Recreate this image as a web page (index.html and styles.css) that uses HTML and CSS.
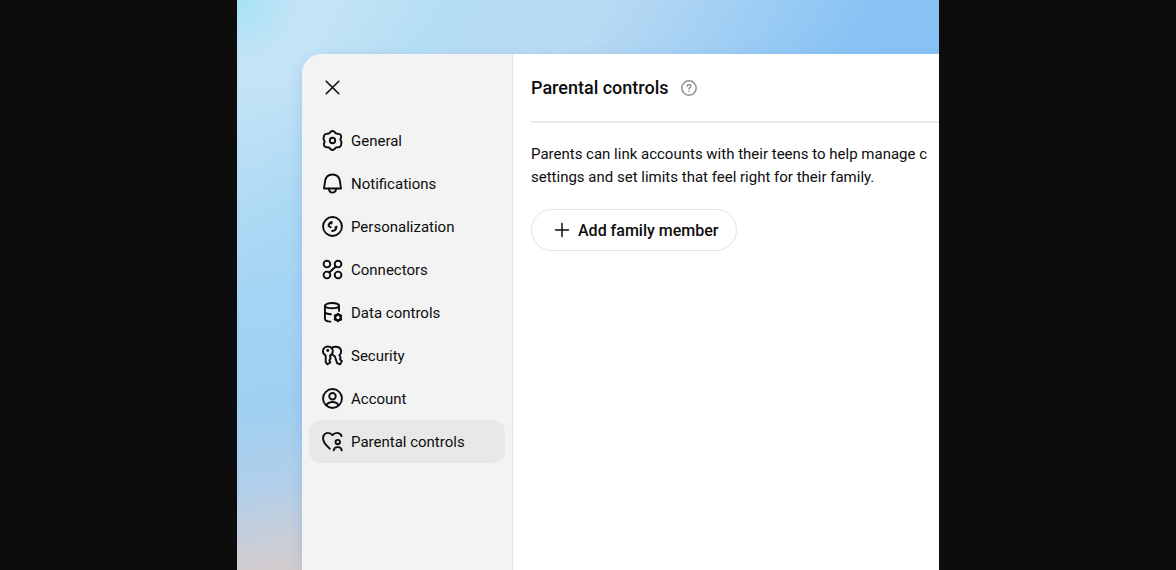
FILE: index.html
```html
<!DOCTYPE html>
<html lang="en">
<head>
<meta charset="utf-8">
<meta name="viewport" content="width=device-width, initial-scale=1">
<title>Parental controls</title>
<link rel="stylesheet" href="styles.css">
</head>
<body>
<main class="stage">
  <section class="dialog">
    <aside class="sidebar">
      <button class="close" type="button" aria-label="Close">
        <svg class="icon" viewBox="0 0 20 20"><path d="M4 4l12 12M16 4L4 16"/></svg>
      </button>
      <nav class="nav">
        <a class="nav-item" href="#general">
          <svg class="icon" viewBox="0 0 20 20"><path d="M8 1.900Q10 .1 12 1.900Q12.900 3.600 15 3.500Q18.300 3.700 18.300 7Q17 8.800 17.900 10Q18.900 11.300 18.300 13Q18.300 16.300 15 16.500Q12.900 16.400 12 18.100Q10 19.900 8 18.100Q7.100 16.400 5 16.500Q1.700 16.300 1.700 13Q3 11.200 2.100 10Q1.100 8.700 1.700 7Q1.700 3.700 5 3.500Q7.100 3.600 8 1.900Z"/><circle cx="10" cy="10" r="2.600"/></svg>
          <span>General</span>
        </a>
        <a class="nav-item" href="#notifications">
          <svg class="icon" viewBox="0 0 20 20"><path d="M1.900 14.800L2.900 8C3.400 4 6 1.400 10 1.400S16.600 4 17.100 8L18.100 14.800Z"/><path d="M6.400 15C6.900 17.500 8.200 18.700 10 18.700S13.100 17.500 13.600 15"/></svg>
          <span>Notifications</span>
        </a>
        <a class="nav-item" href="#personalization">
          <svg class="icon" viewBox="0 0 20 20"><circle cx="10" cy="10" r="9"/><path d="M9.300 5.600Q6 7 6.300 9.500L8.300 10.700M9.700 14.300Q13.500 13.900 13.900 10.300M9.300 5.600L9 7.200M13.900 10.300L12.700 10.900"/></svg>
          <span>Personalization</span>
        </a>
        <a class="nav-item" href="#connectors">
          <svg class="icon" viewBox="0 0 20 20"><circle cx="4.700" cy="4.800" r="3.200"/><circle cx="15.300" cy="4.800" r="3.200"/><circle cx="4.700" cy="15.200" r="3.200"/><circle cx="15.300" cy="15.200" r="3.200"/><path d="M13 7.100L7 12.900"/></svg>
          <span>Connectors</span>
        </a>
        <a class="nav-item" href="#data">
          <svg class="icon" viewBox="0 0 20 20"><ellipse cx="9.500" cy="3.500" rx="6.700" ry="2.500"/><path d="M2.800 3.500V16C2.800 17.600 5 18.600 8 18.700M16.200 3.500V8.500M2.800 9.800C3.500 11 5.500 11.600 8.500 11.600"/><circle class="heavy" cx="15.200" cy="14.800" r="2.700"/><path class="teeth" d="M15.200 11.200V12M15.200 17.600V18.400M12.100 13L12.800 13.400M17.600 16.200L18.300 16.600M12.100 16.600L12.800 16.200M17.600 13.400L18.300 13"/></svg>
          <span>Data controls</span>
        </a>
        <a class="nav-item" href="#security">
          <svg class="icon" viewBox="0 0 20 20"><path d="M5.500 1.400C2.800 1.400.9 3.300.9 5.900C.9 7.800 1.900 9 3.500 9.800V16.400L5.200 18.400L7.900 16.600L7 14.600L8.200 12.800L7.600 10.200C9.500 9.300 10.300 7.700 10.300 5.900C10.300 3.300 8.200 1.400 5.500 1.400Z"/><circle class="solid" cx="5.500" cy="5.300" r="1.400"/><path d="M9.100 2.800C10.300 1.900 12 1.500 13.700 1.700C16.500 2 18.300 4 18.200 6.500C18.200 8.200 17.500 9.200 16.500 9.800L17.700 12L17.100 13.700L18.900 15.200L17.300 18.400L14.300 17.200L12.300 10.900L10.500 9.500"/></svg>
          <span>Security</span>
        </a>
        <a class="nav-item" href="#account">
          <svg class="icon" viewBox="0 0 20 20"><circle cx="10" cy="10" r="9"/><circle cx="10" cy="7.900" r="3.100"/><path d="M4.200 16.400C5.400 14.200 7.400 13.300 10 13.300S14.600 14.200 15.800 16.400"/></svg>
          <span>Account</span>
        </a>
        <a class="nav-item nav-item-active" href="#parental" aria-current="page">
          <svg class="icon" viewBox="0 0 20 20"><path d="M7.500 16.800C3.500 13.600 1 10.800 1 7C1 4 3 1.800 5.600 1.800C7.600 1.800 9 2.600 10 3.900C11 2.600 12.500 1.800 14.300 1.800C16.300 1.800 17.900 2.900 18.700 4.800"/><circle cx="15" cy="10.500" r="2.100"/><path d="M11.200 18.500C11.500 16.300 12.900 15.400 15 15.400S18.500 16.300 18.800 18.500"/></svg>
          <span>Parental controls</span>
        </a>
      </nav>
    </aside>
    <div class="content">
      <header class="header">
        <h1 class="title">Parental controls</h1>
        <button class="help" type="button" aria-label="Help">
          <svg class="help-icon" viewBox="0 0 16 16"><circle cx="8" cy="8" r="7.200"/><path d="M6.200 6.300C6.300 5.100 7 4.600 8 4.600S9.800 5.200 9.800 6.200C9.800 7.500 8 7.500 8 9"/><path d="M8 11.300V11.400"/></svg>
        </button>
      </header>
      <p class="description">Parents can link accounts with their teens to help manage c<br>settings and set limits that feel right for their family.</p>
      <button class="add" type="button">
        <svg class="add-icon" viewBox="0 0 16 16"><path d="M8 1.500V14.500M1.500 8H14.500"/></svg>
        <span>Add family member</span>
      </button>
    </div>
  </section>
</main>
</body>
</html>
```
FILE: styles.css
```css
* {
  box-sizing: border-box;
}

body {
  margin: 0;
  background: #0d0d0d;
  color: #0d0d0d;
  font-family: Roboto, "Liberation Sans", sans-serif;
  font-size: 15px;
}

button {
  padding: 0;
  border: 0;
  background: none;
  color: inherit;
  font: inherit;
  cursor: pointer;
}

.stage {
  display: flex;
  max-width: 702px;
  min-height: 100vh;
  margin: 0 auto;
  padding: 54px 0 0 65px;
  overflow: hidden;
  background:
    radial-gradient(circle at 0 0, #a6e2f5 0, rgba(166, 226, 245, 0) 60px),
    linear-gradient(170deg, rgba(160, 210, 243, 0) 15%, #a5d5f4 50%, #9fd0f2 70%, #b1cfea 84%, #c7ced9 93%, #d5cccb 100%) 0 0 / 80px 100% no-repeat,
    linear-gradient(120deg, #c3e3f6 0, #c3e3f6 10%, #b5def3 20%, #b9daf3 36%, #88c3f4 62%, #84c0f3 100%);
}

.dialog {
  display: flex;
  flex: 1;
  min-width: 0;
  border-radius: 20px 0 0 0;
  background: #fff;
  box-shadow: 0 4px 14px rgba(80, 120, 200, 0.22);
}

.sidebar {
  display: flex;
  flex: 0 0 211px;
  flex-direction: column;
  align-items: flex-start;
  padding: 20px 7px;
  border-right: 1px solid #e6e6e6;
  border-radius: 20px 0 0 0;
  background: #f3f3f3;
}

.close {
  display: flex;
  margin-left: 13px;
  padding: 3px 0;
}

.icon {
  flex: none;
  width: 21px;
  height: 21px;
  fill: none;
  stroke: currentColor;
  stroke-width: 1.8;
  stroke-linecap: round;
  stroke-linejoin: round;
}

.close .icon {
  stroke-width: 1.5;
}

.icon .heavy {
  stroke-width: 2.2;
}

.icon .teeth {
  stroke-width: 2;
}

.icon .solid {
  fill: currentColor;
  stroke: none;
}

.nav {
  align-self: stretch;
  margin-top: 18px;
}

.nav-item {
  display: flex;
  align-items: center;
  gap: 8px;
  height: 43px;
  padding: 0 13px;
  border-radius: 12px;
  color: inherit;
  text-decoration: none;
  white-space: nowrap;
}

.nav-item-active {
  background: #e8e8e8;
}

.content {
  flex: 1;
  min-width: 0;
  padding-left: 18px;
}

.header {
  display: flex;
  align-items: center;
  gap: 12px;
  height: 69px;
  border-bottom: 2px solid #e9e9e9;
}

.title {
  margin: 0;
  font-size: 18px;
  font-weight: 500;
}

.help {
  display: flex;
  color: #8f8f8f;
}

.help-icon,
.add-icon {
  width: 16px;
  height: 16px;
  fill: none;
  stroke: currentColor;
  stroke-width: 1.5;
  stroke-linecap: round;
}

.description {
  margin: 20px 0;
  line-height: 23px;
  white-space: nowrap;
}

.add {
  display: flex;
  align-items: center;
  gap: 8px;
  height: 42px;
  padding: 0 18px 0 22px;
  border: 1px solid #e3e3e3;
  border-radius: 21px;
  font-size: 16px;
  font-weight: 500;
}
```
